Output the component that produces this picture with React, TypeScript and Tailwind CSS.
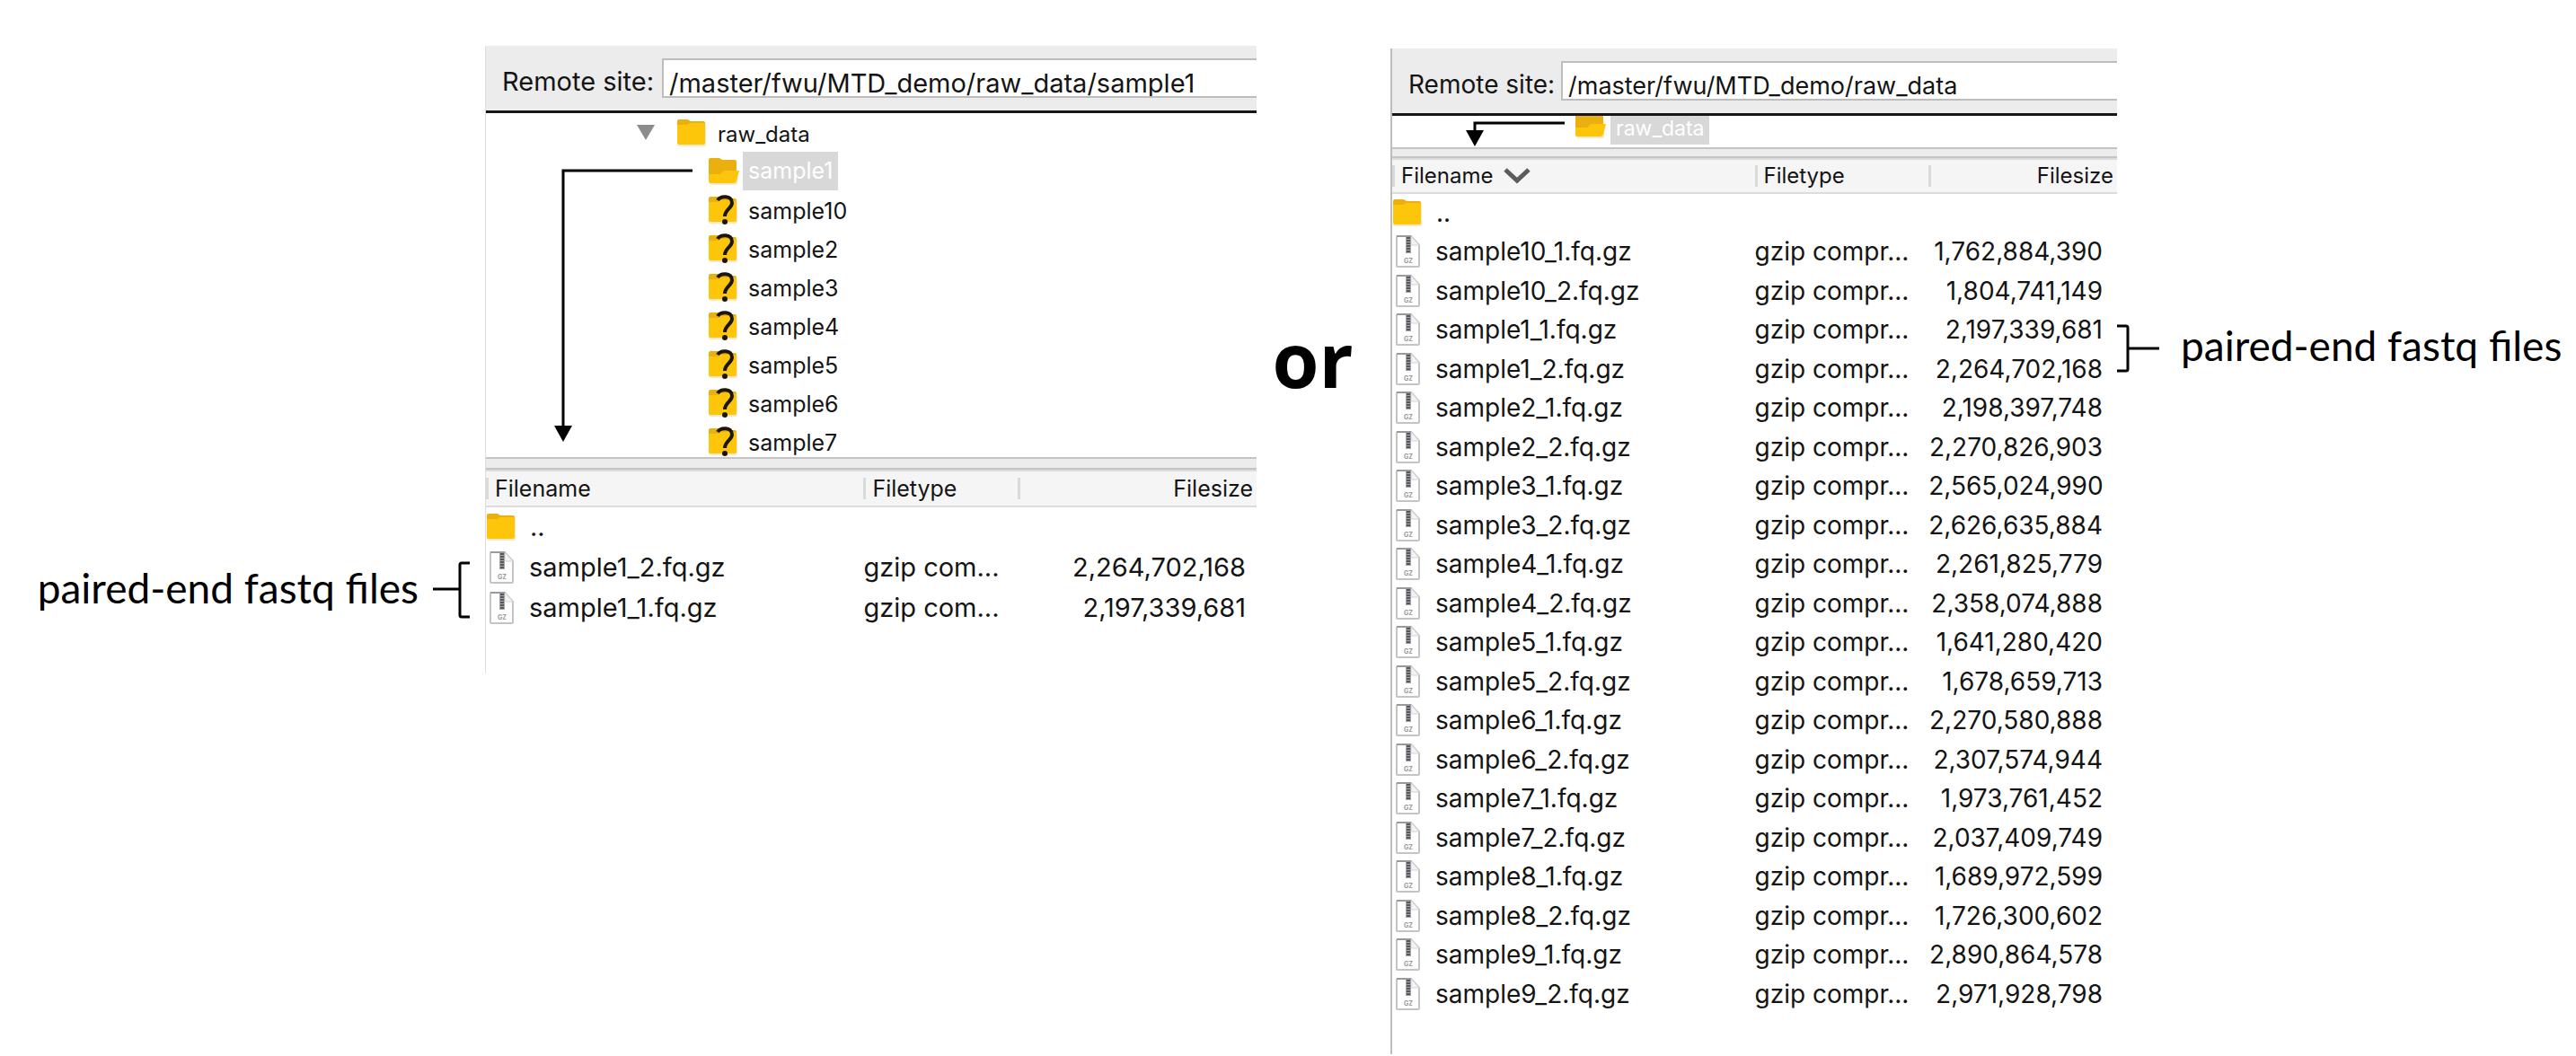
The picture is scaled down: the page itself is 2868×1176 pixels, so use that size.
import React from "react";

type FileRow = { name: string; size: string };

const leftFiles: FileRow[] = [
  { name: "sample1_2.fq.gz", size: "2,264,702,168" },
  { name: "sample1_1.fq.gz", size: "2,197,339,681" },
];

const rightFiles: FileRow[] = [
  { name: "sample10_1.fq.gz", size: "1,762,884,390" },
  { name: "sample10_2.fq.gz", size: "1,804,741,149" },
  { name: "sample1_1.fq.gz", size: "2,197,339,681" },
  { name: "sample1_2.fq.gz", size: "2,264,702,168" },
  { name: "sample2_1.fq.gz", size: "2,198,397,748" },
  { name: "sample2_2.fq.gz", size: "2,270,826,903" },
  { name: "sample3_1.fq.gz", size: "2,565,024,990" },
  { name: "sample3_2.fq.gz", size: "2,626,635,884" },
  { name: "sample4_1.fq.gz", size: "2,261,825,779" },
  { name: "sample4_2.fq.gz", size: "2,358,074,888" },
  { name: "sample5_1.fq.gz", size: "1,641,280,420" },
  { name: "sample5_2.fq.gz", size: "1,678,659,713" },
  { name: "sample6_1.fq.gz", size: "2,270,580,888" },
  { name: "sample6_2.fq.gz", size: "2,307,574,944" },
  { name: "sample7_1.fq.gz", size: "1,973,761,452" },
  { name: "sample7_2.fq.gz", size: "2,037,409,749" },
  { name: "sample8_1.fq.gz", size: "1,689,972,599" },
  { name: "sample8_2.fq.gz", size: "1,726,300,602" },
  { name: "sample9_1.fq.gz", size: "2,890,864,578" },
  { name: "sample9_2.fq.gz", size: "2,971,928,798" },
];

const unknownFolders = ["sample10", "sample2", "sample3", "sample4", "sample5", "sample6", "sample7"];

function Folder() {
  return (
    <svg width="34" height="32" viewBox="0 0 34 32" className="shrink-0" aria-hidden="true">
      <rect x="1" y="4" width="32" height="27" rx="2" fill="#f3d9a0" opacity="0.6" />
      <path d="M1 3q0-2 2-2h10l3 2h14q2 0 2 2v5H1z" fill="#e9b010" />
      <path d="M1 7h11l4-2h14q2 0 2 2v20q0 2-2 2H3q-2 0-2-2z" fill="#fec60a" />
    </svg>
  );
}

function OpenFolder() {
  return (
    <svg width="36" height="32" viewBox="0 0 36 32" className="shrink-0" aria-hidden="true">
      <rect x="2" y="22" width="31" height="9" rx="2" fill="#f3d9a0" opacity="0.6" />
      <path d="M1 3q0-2 2-2h10l3 2h14q2 0 2 2v20H1z" fill="#e9b010" />
      <path d="M1 19h13l4-4h17l-3 12q-1 2-3 2H3q-2 0-2-2z" fill="#fec60a" />
    </svg>
  );
}

function UnknownFolder() {
  return (
    <svg width="34" height="34" viewBox="0 0 34 34" className="shrink-0" aria-hidden="true">
      <rect x="1" y="6" width="32" height="26" rx="2" fill="#f3d9a0" opacity="0.6" />
      <path d="M1 4q0-2 2-2h9l3 2h15q2 0 2 2v5H1z" fill="#e9b010" />
      <path d="M1 8h11l3-2h15q2 0 2 2v20q0 2-2 2H3q-2 0-2-2z" fill="#fec60a" />
      <path d="M11 6C14 1 27 0 27 9C27 15 19 16 19 24" fill="none" stroke="#1c1606" strokeWidth="4" />
      <circle cx="19" cy="30" r="3" fill="#1c1606" />
    </svg>
  );
}

function GzFile() {
  return (
    <svg width="28" height="36" viewBox="0 0 28 36" className="shrink-0" aria-hidden="true">
      <path d="M2 1h15l9 10v23q0 1-1 1H2q-1 0-1-1V2q0-1 1-1z" fill="#fff" stroke="#c4c4c4" strokeWidth="2" />
      <path d="M17 1v9q0 1 1 1h8z" fill="#f4f4f4" stroke="#d4d4d4" strokeWidth="1" />
      <path d="M1 1h16" stroke="#9a9a9a" strokeWidth="2" />
      <rect x="11" y="2" width="6" height="18" fill="#a3a5ab" />
      <path d="M14 2v18" stroke="#55575c" strokeWidth="4" strokeDasharray="2 1" />
      <text x="14" y="31" textAnchor="middle" fontFamily="Inter" fontWeight="700" fontSize="7" fill="#9a9a9a">
        GZ
      </text>
    </svg>
  );
}

function SiteBar({ id, path, labelClass, inputClass }: { id: string; path: string; labelClass: string; inputClass: string }) {
  return (
    <div className="flex h-[75px] items-start border-b-[3px] border-[#161616] bg-[#ececec] pt-3.5 pl-[18px]">
      <label htmlFor={id} className={`shrink-0 pt-2 leading-9 whitespace-nowrap ${labelClass}`}>
        Remote site:
      </label>
      <input
        id={id}
        defaultValue={path}
        className={`h-11 min-w-0 flex-1 border-y-2 border-l-2 border-[#bdbdbd] bg-white pt-2.5 leading-8 outline-none ${inputClass}`}
      />
    </div>
  );
}

function HeadLabel({ children, right = false }: { children: React.ReactNode; right?: boolean }) {
  return (
    <div
      className={
        right
          ? "flex h-6 items-center justify-end border-l-[3px] border-[#d9d9d9] pr-1"
          : "flex h-6 items-center gap-3 border-l-[3px] border-[#d9d9d9] pl-[7px]"
      }
    >
      {children}
    </div>
  );
}

function FileTable({
  files,
  kind,
  cols,
  sorted = false,
  tableClass,
  headClass,
  parentClass,
  rowClass,
  sizeClass,
}: {
  files: FileRow[];
  kind: string;
  cols: string[];
  sorted?: boolean;
  tableClass: string;
  headClass: string;
  parentClass: string;
  rowClass: string;
  sizeClass: string;
}) {
  return (
    <table className={`w-full table-fixed border-collapse text-left leading-9 whitespace-nowrap ${tableClass}`}>
      <colgroup>
        {cols.map((c, i) => (
          <col key={i} className={c} />
        ))}
      </colgroup>
      <thead className={`border-t-2 border-b-2 border-[#dcdcdc] bg-[#f5f5f5] ${headClass}`}>
        <tr>
          <th className="p-0 font-normal">
            <HeadLabel>
              Filename
              {sorted && (
                <svg width="30" height="18" viewBox="0 0 30 18" fill="none" aria-hidden="true">
                  <path d="M2 2l13 12L28 2" stroke="#5c5c5c" strokeWidth="5" />
                </svg>
              )}
            </HeadLabel>
          </th>
          <th className="p-0 font-normal">
            <HeadLabel>Filetype</HeadLabel>
          </th>
          <th className="p-0 font-normal">
            <HeadLabel right>Filesize</HeadLabel>
          </th>
        </tr>
      </thead>
      <tbody>
        <tr className={parentClass}>
          <td className="p-0" colSpan={3}>
            <div className="flex items-center gap-[15px]">
              <Folder />
              ..
            </div>
          </td>
        </tr>
        {files.map((f) => (
          <tr key={f.name} className={rowClass}>
            <td className="p-0">
              <div className="flex items-center gap-4 pl-1">
                <GzFile />
                {f.name}
              </div>
            </td>
            <td className="p-0">{kind}</td>
            <td className={sizeClass}>{f.size}</td>
          </tr>
        ))}
      </tbody>
    </table>
  );
}

export default function App() {
  return (
    <main className="grid min-h-screen grid-cols-[minmax(0,540fr)_minmax(0,859fr)_minmax(0,149fr)_minmax(0,809fr)_minmax(0,511fr)] items-start bg-white font-['Inter',sans-serif] text-[#141414]">
      <div className="flex items-start justify-end gap-4 pt-[625px] pr-[17px] font-['Lato',sans-serif] text-[46px] leading-[60px] whitespace-nowrap text-black">
        <p>paired-end fastq files</p>
        <svg width="41" height="64" viewBox="0 0 41 64" fill="none" className="shrink-0" aria-hidden="true">
          <path d="M41 2H32q-2 0-2 2V60q0 2 2 2h9M0 31h30" stroke="#000" strokeWidth="3" />
        </svg>
      </div>

      <section className="mt-[51px] border-l border-[#dedede] pb-[50px]">
        <SiteBar
          id="site-left"
          path="/master/fwu/MTD_demo/raw_data/sample1"
          labelClass="w-[178px] text-[29px]"
          inputClass="pl-1.5 text-[29px]"
        />
        <div className="relative h-[383px] overflow-hidden text-[25px] leading-[43px]">
          <ul>
            <li>
              <div className="flex h-[43px] items-center pl-[168px] text-2xl">
                <button type="button" aria-label="Collapse raw_data" className="mr-6">
                  <svg width="20" height="17" viewBox="0 0 20 17">
                    <path d="M0 0h20L10 17z" fill="#8c8c8c" />
                  </svg>
                </button>
                <Folder />
                <span className="pt-1 pl-3">raw_data</span>
              </div>
              <ul>
                <li className="flex h-[43px] items-center pl-[247px]">
                  <OpenFolder />
                  <span className="ml-[3px] bg-[#d8d8d8] px-1.5 text-white">sample1</span>
                </li>
                {unknownFolders.map((n) => (
                  <li key={n} className="flex h-[43px] items-center pl-[247px]">
                    <UnknownFolder />
                    <span className="pt-1 pl-[11px] leading-[39px]">{n}</span>
                  </li>
                ))}
              </ul>
            </li>
          </ul>
          <svg width="154" height="304" viewBox="0 0 154 304" fill="none" className="absolute top-[62px] left-[76px]" aria-hidden="true">
            <path d="M154 2H10V290" stroke="#000" strokeWidth="3" />
            <path d="M0 286h20L10 304z" fill="#000" />
          </svg>
        </div>
        <div className="h-3.5 border-y-2 border-[#c4c4c4] bg-[#ececec]" />
        <FileTable
          files={leftFiles}
          kind="gzip com..."
          cols={["w-[49%]", "w-[20%]", "w-[31%]"]}
          tableClass="text-[29px]"
          headClass="h-10 text-[25px]"
          parentClass="h-[45px]"
          rowClass="odd:h-[46px] even:h-[45px]"
          sizeClass="p-0 pr-3 text-right"
        />
      </section>

      <p className="pt-[350px] pr-6 text-center font-['Open_Sans',sans-serif] text-[84px] leading-[100px] font-bold text-black">or</p>

      <section className="mt-[54px] border-l-2 border-[#bdbdbd] pb-[46px]">
        <SiteBar id="site-right" path="/master/fwu/MTD_demo/raw_data" labelClass="w-[170px] text-[28px]" inputClass="pl-1.5 text-[27px]" />
        <div className="relative flex h-[35px] items-start overflow-hidden pl-[203px] text-[23px]">
          <div className="-mt-1.5 h-[38px]">
            <OpenFolder />
          </div>
          <span className="ml-1 bg-[#d8d8d8] px-1.5 pb-1 leading-[28px] text-white">raw_data</span>
          <svg width="110" height="28" viewBox="0 0 110 28" fill="none" className="absolute top-1.5 left-[82px]" aria-hidden="true">
            <path d="M110 2H10V14" stroke="#000" strokeWidth="3" />
            <path d="M0 10h20L10 28z" fill="#000" />
          </svg>
        </div>
        <div className="h-3 border-y-2 border-[#c4c4c4] bg-[#ececec]" />
        <FileTable
          files={rightFiles}
          kind="gzip compr..."
          cols={["w-[50%]", "w-[24%]", "w-[26%]"]}
          sorted
          tableClass="text-[28px]"
          headClass="h-[38px] text-2xl"
          parentClass="h-[43px]"
          rowClass="odd:h-[43px] even:h-[44px]"
          sizeClass="p-0 pr-4 text-right"
        />
      </section>

      <div className="flex items-start gap-6 pt-[361px] font-['Lato',sans-serif] text-[46px] leading-[48px] whitespace-nowrap text-black">
        <svg width="47" height="54" viewBox="0 0 47 54" fill="none" className="shrink-0" aria-hidden="true">
          <path d="M0 2h10q2 0 2 2V50q0 2-2 2H0M12 27h35" stroke="#000" strokeWidth="3" />
        </svg>
        <p>paired-end fastq files</p>
      </div>
    </main>
  );
}
